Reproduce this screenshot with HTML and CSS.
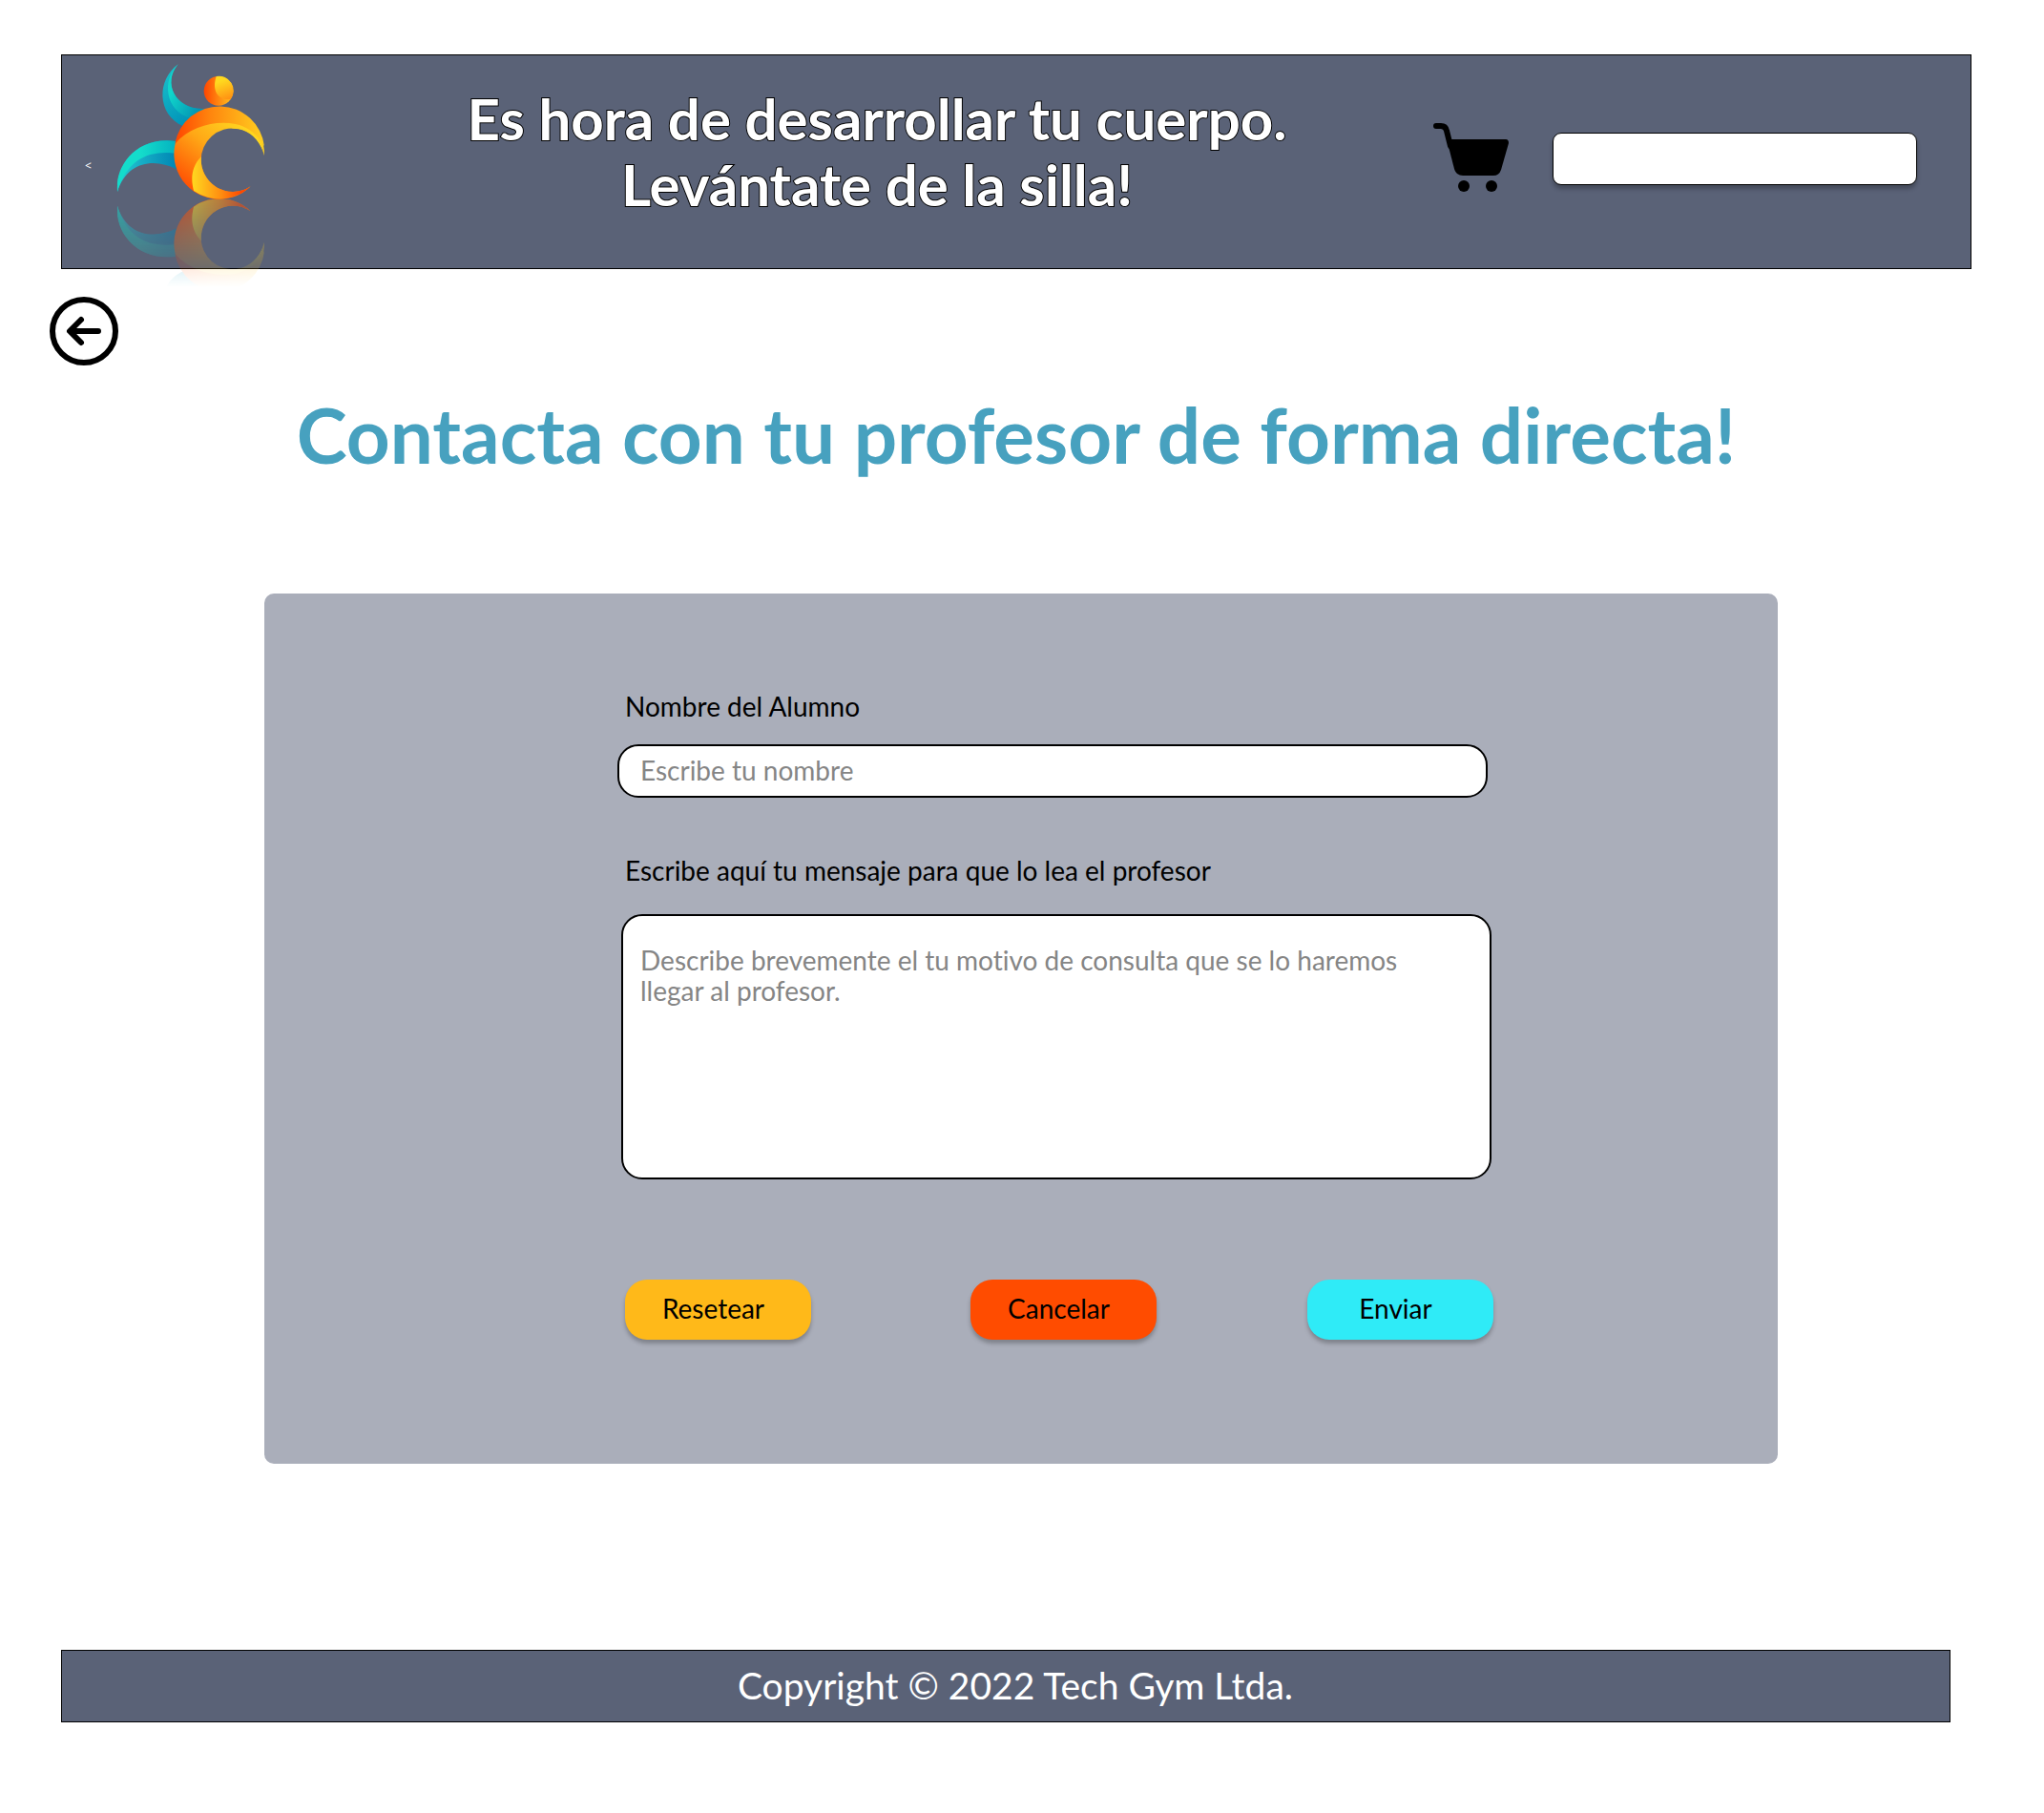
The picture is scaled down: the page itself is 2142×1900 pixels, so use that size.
FILE: index.html
```html
<!DOCTYPE html>
<html lang="es">
<head>
  <meta charset="utf-8">
  <meta name="viewport" content="width=device-width, initial-scale=1">
  <title>Tech Gym</title>
  <link rel="stylesheet" href="styles.css">
</head>
<body>
  <header class="header">
    <a class="header-prev" href="#">&lt;</a>
    <a class="logo" href="#" aria-label="Tech Gym">
      <svg class="logo-art" viewBox="240 78 480 705" aria-hidden="true">
        <defs>
          <linearGradient id="armDark" x1="0" y1="0" x2="0.5" y2="1"><stop offset="0" stop-color="#1cc4cc"/><stop offset="1" stop-color="#0092b8"/></linearGradient>
          <linearGradient id="armLight" x1="0" y1="0" x2="1" y2="0.8"><stop offset="0.3" stop-color="#10d6cb"/><stop offset="1" stop-color="#0086ae"/></linearGradient>
          <linearGradient id="legDark" x1="0" y1="0" x2="1" y2="0"><stop offset="0.1" stop-color="#22c3cf"/><stop offset="1" stop-color="#0086b4"/></linearGradient>
          <linearGradient id="legLight" x1="0" y1="0" x2="1" y2="0"><stop offset="0.4" stop-color="#14dccb"/><stop offset="1" stop-color="#04b2c0"/></linearGradient>
          <linearGradient id="torso" gradientUnits="userSpaceOnUse" x1="620" y1="250" x2="450" y2="460"><stop offset="0" stop-color="#ffd520"/><stop offset="0.45" stop-color="#ffa816"/><stop offset="1" stop-color="#ff4d03"/></linearGradient>
          <linearGradient id="band" x1="0" y1="0" x2="1" y2="0"><stop offset="0" stop-color="#ff4500"/><stop offset="0.4" stop-color="#ff860e"/><stop offset="1" stop-color="#ffd020"/></linearGradient>
          <linearGradient id="shoulder" x1="0" y1="0" x2="1" y2="0"><stop offset="0" stop-color="#ffc51c"/><stop offset="1" stop-color="#ffdc20"/></linearGradient>
          <linearGradient id="hip" x1="0" y1="0" x2="1" y2="0"><stop offset="0" stop-color="#ffd820"/><stop offset="0.5" stop-color="#ff8c10"/><stop offset="0.85" stop-color="#ff4500"/></linearGradient>
          <linearGradient id="head" x1="0" y1="0" x2="1" y2="0"><stop offset="0" stop-color="#ff4500"/><stop offset="1" stop-color="#ffc820"/></linearGradient>
          <linearGradient id="face" x1="0.3" y1="0" x2="0.6" y2="1"><stop offset="0.2" stop-color="#ffd91f"/><stop offset="1" stop-color="#ff9313"/></linearGradient>
          <linearGradient id="fade" gradientUnits="userSpaceOnUse" x1="0" y1="505" x2="0" y2="783"><stop offset="0" stop-color="#fff" stop-opacity="0.58"/><stop offset="1" stop-color="#fff" stop-opacity="0"/></linearGradient>
          <mask id="fadeMask" maskUnits="userSpaceOnUse" x="240" y="505" width="480" height="278"><rect x="240" y="505" width="480" height="278" fill="url(#fade)"/></mask>
          <g id="runner">
            <path fill="url(#armDark)" d="M440 82C373 130 372 240 456 277Q490 240 540 222H516C430 222 390 140 440 82Z"/>
            <path fill="url(#armLight)" d="M440 82C388 130 398 230 480 252Q505 236 540 223H516C430 222 390 140 440 82Z"/>
            <path fill="url(#legDark)" d="M249 483C244 400 310 307 434 324V412C370 378 280 384 249 483Z"/>
            <path fill="url(#legLight)" d="M249 468C246 400 310 307 434 324V362C350 352 280 378 249 483Z"/>
            <path fill="url(#torso)" d="M711 369A142 142 0 1 0 668 466A100 100 0 1 1 711 369Z"/>
            <path fill="url(#shoulder)" d="M570 266C640 262 700 300 711 369C698 320 662 284 612 284Z"/>
            <path fill="url(#band)" d="M711 340A142 142 0 0 0 430 332C480 275 560 258 620 270C665 280 690 305 711 340Z"/>
            <path fill="url(#hip)" d="M513 372C480 405 480 445 489 480A142 142 0 0 0 668 466A100 100 0 0 1 513 372Z"/>
            <circle fill="url(#head)" cx="567" cy="166" r="46"/>
            <path fill="url(#face)" d="M560 120C545 165 565 195 605 193A46 46 0 0 0 560 120Z"/>
          </g>
        </defs>
        <use href="#runner"/>
        <g mask="url(#fadeMask)"><use href="#runner" transform="matrix(1 0 0 -1 0 1010)"/></g>
      </svg>
    </a>
    <p class="slogan">Es hora de desarrollar tu cuerpo.<br>Levántate de la silla!</p>
    <a class="cart" href="#" aria-label="Carrito">
      <svg class="cart-icon" viewBox="0 0 79 72" aria-hidden="true">
        <path d="M3 3H8Q13 3 14 8L18 24" fill="none" stroke="#000" stroke-width="6" stroke-linecap="round" stroke-linejoin="round"/>
        <path d="M18 17H76Q79 17 79 21L71 49Q69 55 63 55H31Q24 55 22 48L14 17Z"/>
        <circle cx="32" cy="66" r="6"/>
        <circle cx="61" cy="66" r="6"/>
      </svg>
    </a>
    <input class="search" type="search" aria-label="Buscar">
  </header>

  <a class="back" href="#" aria-label="Volver">
    <svg class="back-icon" viewBox="0 0 72 72" fill="none" stroke="#000" stroke-width="6" stroke-linecap="round" stroke-linejoin="round" aria-hidden="true">
      <circle cx="36" cy="36" r="33"/>
      <path d="M51 36H22M33 24L21 36L33 48"/>
    </svg>
  </a>

  <main>
    <h1 class="title">Contacta con tu profesor de forma directa!</h1>
    <form class="card">
      <label class="label" for="nombre">Nombre del Alumno</label>
      <input class="field name" id="nombre" type="text" placeholder="Escribe tu nombre">
      <label class="label" for="mensaje">Escribe aquí tu mensaje para que lo lea el profesor</label>
      <textarea class="field message" id="mensaje" placeholder="Describe brevemente el tu motivo de consulta que se lo haremos llegar al profesor."></textarea>
      <div class="actions">
        <button class="button reset" type="reset">Resetear</button>
        <button class="button cancel" type="button">Cancelar</button>
        <button class="button send" type="submit">Enviar</button>
      </div>
    </form>
  </main>

  <footer class="footer">Copyright © 2022 Tech Gym Ltda.</footer>
</body>
</html>
```
FILE: styles.css
```css
*,
*::before,
*::after {
  box-sizing: border-box;
}

body {
  margin: 0;
  padding: 57px 76px 94px 64px;
  background: #fff;
  color: #000;
  font-family: Lato, "Noto Sans", sans-serif;
  font-size: 28px;
  font-variant-ligatures: none;
  line-height: 32px;
}

.header {
  display: flex;
  align-items: center;
  min-height: 225px;
  padding: 0 56px 0 24px;
  background: #5a6277;
  border: 1px solid #000;
}

.header-prev {
  width: 31px;
  margin-top: 8px;
  color: #fff;
  font-family: "Noto Sans", sans-serif;
  font-size: 12px;
  line-height: 16px;
  text-decoration: none;
}

.logo {
  align-self: flex-start;
  margin: 8px 56px -20px 0;
}

.logo-art {
  display: block;
  width: 160px;
  height: 235px;
}

.slogan {
  flex: 1;
  margin: 0;
  padding-bottom: 22px;
  color: #fff;
  font-size: 60px;
  font-weight: 700;
  line-height: 69px;
  text-align: center;
  -webkit-text-stroke: 2px #000;
  paint-order: stroke fill;
}

.cart {
  margin: 0 46px 10px 0;
}

.cart-icon {
  display: block;
  width: 79px;
  height: 72px;
}

.search {
  width: 382px;
  height: 55px;
  margin: 0 0 6px;
  padding: 0 16px;
  background: #fff;
  border: 1px solid #000;
  border-radius: 9px;
  box-shadow: 0 4px 4px rgba(0, 0, 0, 0.25);
  font: inherit;
}

.back {
  display: block;
  width: 72px;
  margin: 29px 0 0 -12px;
}

.back-icon {
  display: block;
  width: 72px;
  height: 72px;
}

.title {
  margin: 26px 0 121px;
  color: #47a1bf;
  font-size: 80px;
  font-weight: 700;
  line-height: 92px;
  text-align: center;
}

.card {
  display: flex;
  flex-direction: column;
  margin: 0 203px 0 213px;
  padding: 102px 298px 130px 370px;
  background: #aaaeba;
  border-radius: 10px;
}

.label {
  margin-left: 8px;
}

.field {
  background: #fff;
  border: 2px solid #000;
  border-radius: 22px;
  color: #000;
  font: inherit;
  font-variant-ligatures: none;
}

.field::placeholder {
  color: #858585;
  opacity: 1;
}

.name {
  height: 56px;
  margin: 24px 6px 60px 0;
  padding: 0 22px 2px;
}

.message {
  height: 278px;
  margin: 30px 2px 0 4px;
  padding: 30px 60px 30px 18px;
  resize: none;
}

.actions {
  display: flex;
  gap: 158px;
  margin: 105px 0 0 8px;
}

.button {
  width: 195px;
  height: 63px;
  padding: 0 10px 4px 0;
  border: 0;
  border-radius: 23px;
  box-shadow: 0 4px 4px rgba(0, 0, 0, 0.25);
  color: #000;
  font: inherit;
}

.reset {
  margin-right: 9px;
  background: #ffb919;
}

.cancel {
  background: #ff4c00;
}

.send {
  background: #2febf7;
}

.footer {
  display: flex;
  align-items: center;
  justify-content: center;
  min-height: 76px;
  margin: 195px 22px 0 0;
  padding: 0 0 2px 20px;
  background: #5a6277;
  border: 1px solid #000;
  color: #fff;
  font-size: 39px;
  line-height: 46px;
}
```
